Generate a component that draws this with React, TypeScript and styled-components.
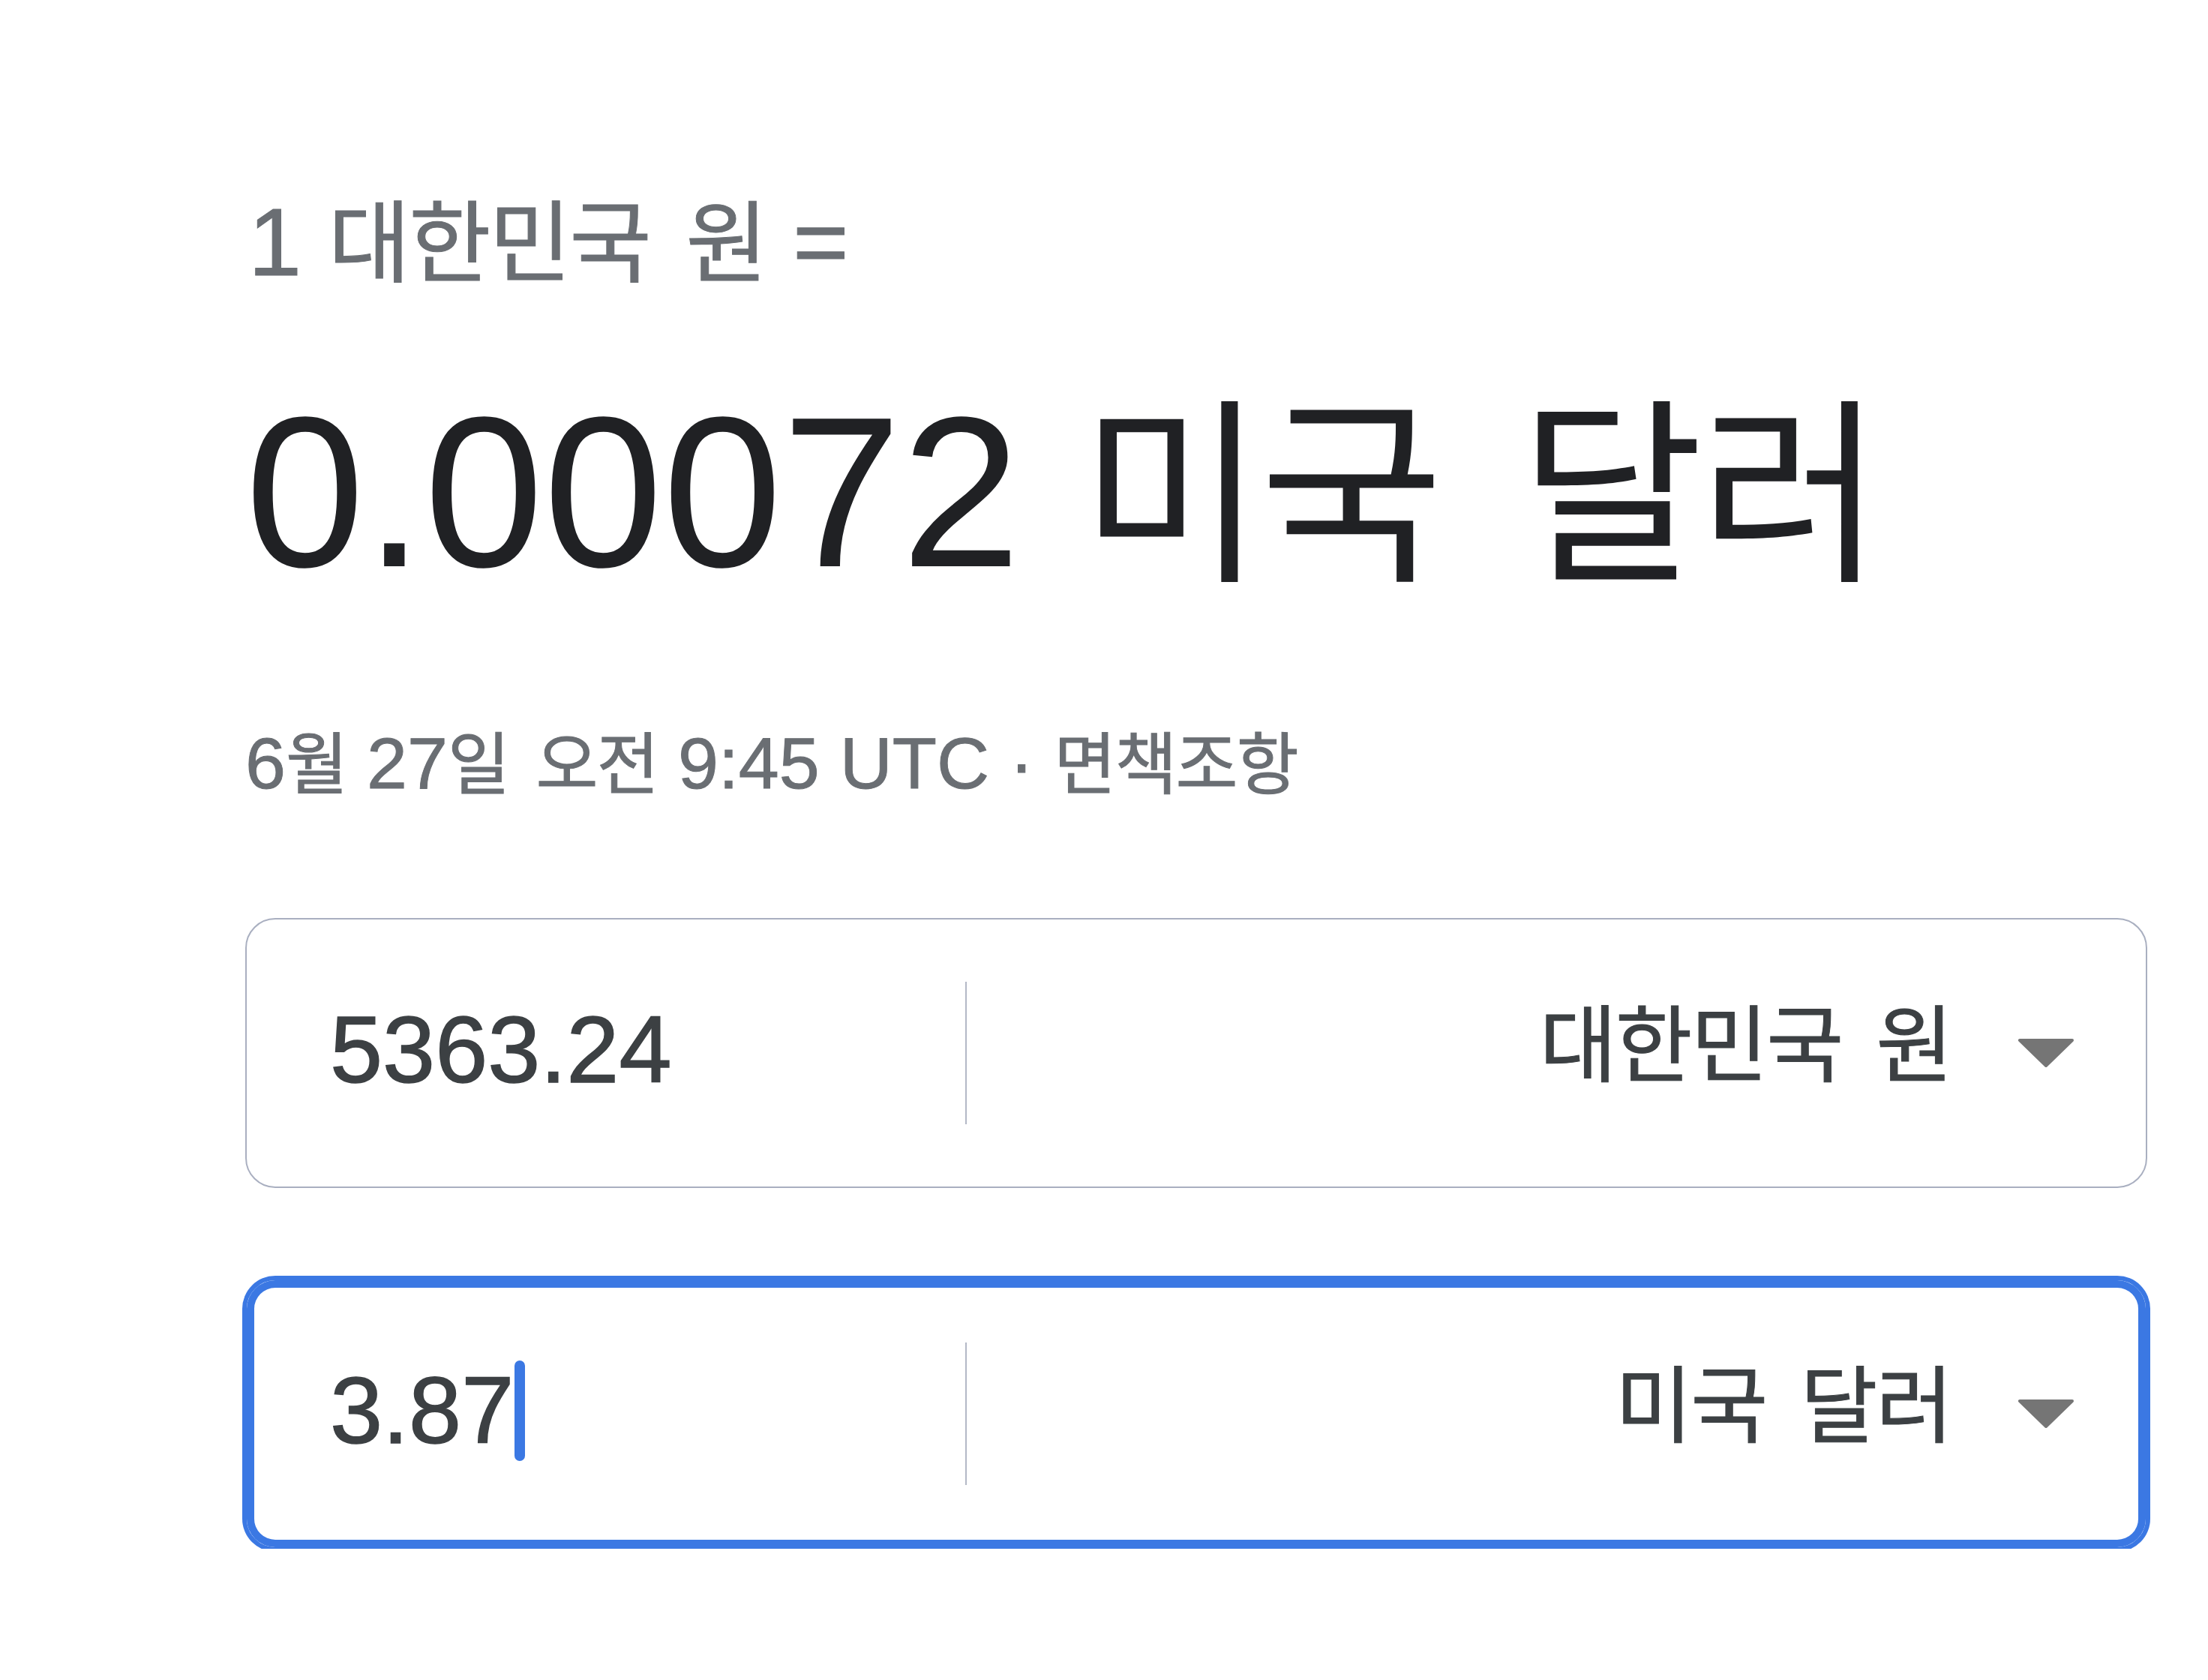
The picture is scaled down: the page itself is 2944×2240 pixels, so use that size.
import styled, { createGlobalStyle, css } from 'styled-components';

const GlobalStyle = createGlobalStyle`
  html, body {
    margin: 0;
    padding: 0;
    background: #ffffff;
  }

  body {
    font-family: 'Liberation Sans', Arial, 'Noto Sans CJK KR', sans-serif;
  }
`;

// Noto's hangul is wider than the reference face, so it is set a bit smaller
const hangulType = css`
  font-family: 'Noto Sans CJK KR', sans-serif;
  letter-spacing: -0.02em;
  word-spacing: 0.2em;
`;

const Page = styled.main`
  display: flex;
  flex-direction: column;
  width: 2536px;
  padding: 259px 0 0 327px;
`;

const Hangul = styled.span`
  ${hangulType};
  font-size: 0.93em;
  line-height: 0.8;
`;

const RateFrom = styled.div`
  font-size: 128px;
  line-height: 1;
  color: #6a6e73;
  padding-left: 4px;
  -webkit-text-stroke: 1px #6a6e73;
`;

const RateTo = styled.div`
  margin-top: 126px;
  font-size: 286px;
  line-height: 1;
  color: #202124;
`;

const Stamp = styled.div`
  margin-top: 170px;
  font-size: 97px;
  line-height: 1;
  color: #6a6e73;
  -webkit-text-stroke: 1px #6a6e73;
`;

const Converter = styled.div`
  display: flex;
  flex-direction: column;
  gap: 121px;
  margin-top: 158px;
`;

const Field = styled.div<{ $focused?: boolean }>`
  display: flex;
  align-items: center;
  height: 360px;
  box-sizing: border-box;
  border: 2px solid ${(p) => (p.$focused ? '#3b78e3' : '#a9afc0')};
  border-radius: 40px;
  box-shadow: ${(p) =>
    p.$focused ? '0 0 0 4px #3b78e3, inset 0 0 0 10px #3b78e3' : 'none'};
  background: #ffffff;
`;

const Amount = styled.div`
  display: flex;
  align-items: center;
  width: 958px;
  box-sizing: border-box;
  padding: 0 0 8px 111px;
  font-size: 126px;
  line-height: 1;
  color: #3c4043;
  -webkit-text-stroke: 1.5px #3c4043;
`;

const Caret = styled.span`
  display: inline-block;
  width: 14px;
  height: 134px;
  margin-left: 1px;
  border-radius: 7px;
  background: #3b78e3;
  -webkit-text-stroke: 0;
`;

const Divider = styled.div`
  width: 2px;
  height: 190px;
  background: #b3b8c6;
`;

const CurrencySelect = styled.div`
  flex: 1;
  display: flex;
  align-items: center;
  justify-content: flex-end;
  gap: 88px;
  padding-right: 95px;
  color: #3c4043;
`;

const CurrencyName = styled.span`
  ${hangulType};
  font-size: 112px;
  line-height: 1;
  margin-bottom: 38px;
  -webkit-text-stroke: 1px #3c4043;
`;

const DropArrow = () => (
  <svg width="76" height="38" viewBox="0 0 76 38">
    <path
      d="M3 2 L73 2 L38 36 Z"
      fill="#757575"
      stroke="#757575"
      strokeWidth="4"
      strokeLinejoin="round"
    />
  </svg>
);

const App = () => {
  return (
    <>
      <GlobalStyle />
      <Page>
        <RateFrom>
          1 <Hangul>대한민국 원</Hangul> =
        </RateFrom>
        <RateTo>
          0.00072 <Hangul>미국 달러</Hangul>
        </RateTo>
        <Stamp>
          6<Hangul>월</Hangul> 27<Hangul>일 오전</Hangul> 9:45 UTC ·{' '}
          <Hangul>면책조항</Hangul>
        </Stamp>
        <Converter>
          <Field>
            <Amount>5363.24</Amount>
            <Divider />
            <CurrencySelect>
              <CurrencyName>대한민국 원</CurrencyName>
              <DropArrow />
            </CurrencySelect>
          </Field>
          <Field $focused>
            <Amount>
              3.87
              <Caret />
            </Amount>
            <Divider />
            <CurrencySelect>
              <CurrencyName>미국 달러</CurrencyName>
              <DropArrow />
            </CurrencySelect>
          </Field>
        </Converter>
      </Page>
    </>
  );
};

export default App;
